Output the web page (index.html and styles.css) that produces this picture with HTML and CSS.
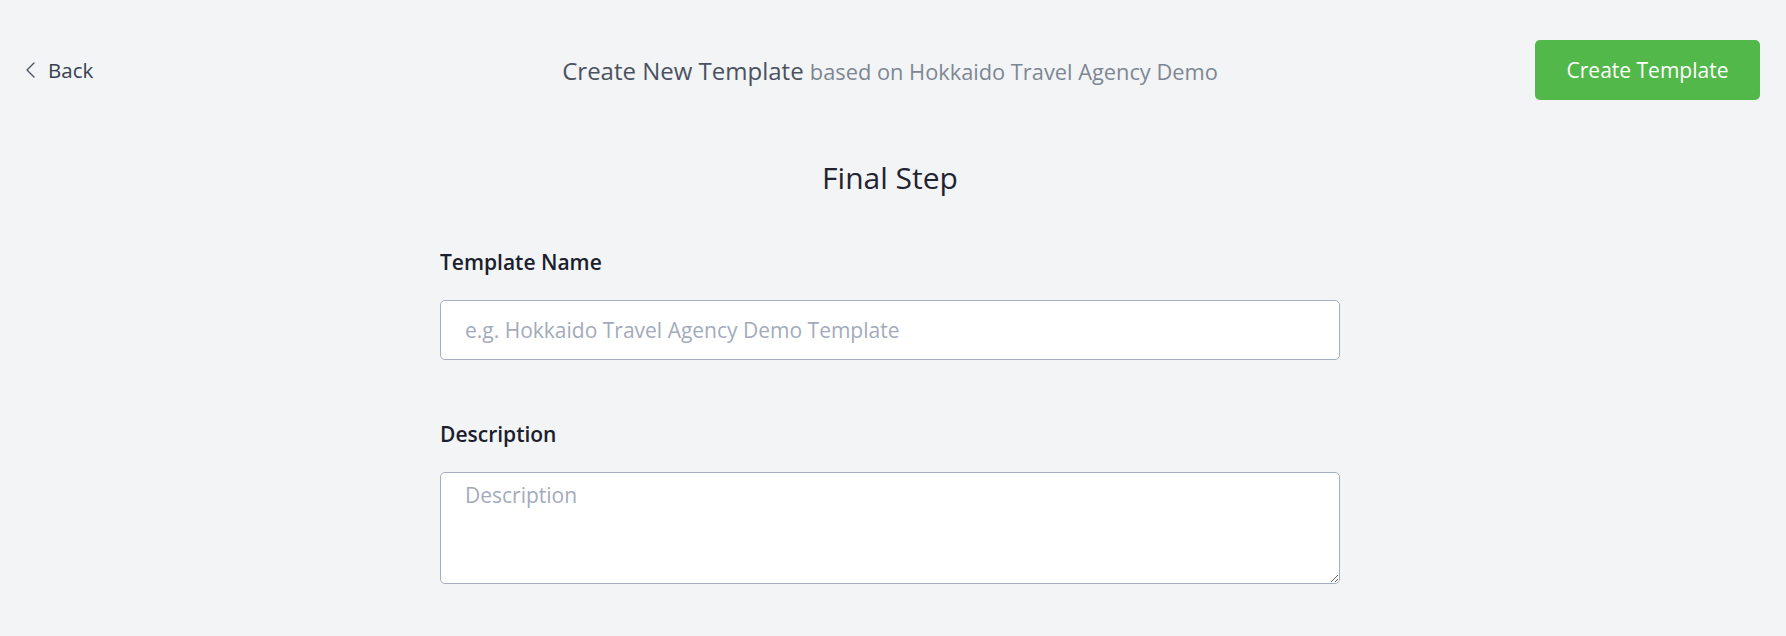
FILE: index.html
```html
<!DOCTYPE html>
<html lang="en">
<head>
<meta charset="utf-8">
<title>Create New Template</title>
<link rel="stylesheet" href="styles.css">
</head>
<body>
<div class="page">
  <header class="topbar">
    <a class="back" href="#">
      <svg class="back-icon" width="12" height="16" viewBox="0 0 12 16" aria-hidden="true">
        <path d="M9 1 L2 8 L9 15" fill="none" stroke="currentColor" stroke-width="1.4" stroke-linecap="round" stroke-linejoin="round"/>
      </svg>
      <span>Back</span>
    </a>
    <div class="title">Create New Template <span class="title-sub">based on Hokkaido Travel Agency Demo</span></div>
    <div class="actions">
      <button class="btn-create" type="button">Create Template</button>
    </div>
  </header>

  <main class="content">
    <h1 class="step-title">Final Step</h1>
    <form class="form">
      <label class="field-label" for="tpl-name">Template Name</label>
      <input class="field-input" id="tpl-name" type="text" placeholder="e.g. Hokkaido Travel Agency Demo Template">
      <label class="field-label field-label-2" for="tpl-desc">Description</label>
      <textarea class="field-textarea" id="tpl-desc" placeholder="Description"></textarea>
    </form>
  </main>
</div>
</body>
</html>
```

FILE: styles.css
```css
html, body {
  margin: 0;
  padding: 0;
  background: #f3f4f6;
}

body {
  font-family: "Open Sans", "Noto Sans", sans-serif;
  color: #1f2937;
}

.page {
  width: 1780px;
}

.topbar {
  display: grid;
  grid-template-columns: 1fr auto 1fr;
  align-items: center;
  height: 60px;
  padding: 40px 20px 0;
}

.back {
  display: flex;
  align-items: center;
  gap: 11px;
  color: #374151;
  text-decoration: none;
  font-size: 20.5px;
  padding-left: 5px;
  justify-self: start;
}

.back-icon {
  display: block;
  color: #4b5563;
}

.title {
  font-size: 24px;
  color: #4a5260;
  white-space: nowrap;
}

.title-sub {
  font-size: 21.8px;
  color: #7d8793;
}

.actions {
  display: flex;
  justify-content: flex-end;
}

.btn-create {
  height: 60px;
  width: 225px;
  border: none;
  border-radius: 5px;
  background: #52b84a;
  color: #ffffff;
  font-family: "Open Sans", "Noto Sans", sans-serif;
  font-size: 21px;
  padding: 0;
  cursor: pointer;
}

.content {
  display: flex;
  flex-direction: column;
  align-items: center;
  padding-top: 58px;
}

.step-title {
  margin: 0;
  font-size: 30px;
  line-height: 40px;
  font-weight: 400;
  color: #1f2430;
}

.form {
  width: 900px;
  display: flex;
  flex-direction: column;
  margin-top: 50px;
}

.field-label {
  font-size: 21px;
  line-height: 28px;
  font-weight: 600;
  color: #1a202c;
  margin-bottom: 24px;
}

.field-label-2 {
  margin-top: 60px;
}

.field-input,
.field-textarea {
  box-sizing: border-box;
  width: 100%;
  border: 1px solid #a5aec0;
  border-radius: 5px;
  background: #ffffff;
  font-family: "Open Sans", "Noto Sans", sans-serif;
  font-size: 21px;
  color: #1f2937;
  padding: 0 24px;
  outline: none;
}

.field-input {
  height: 60px;
}

.field-textarea {
  height: 112px;
  padding: 8px 24px;
  line-height: 28px;
  resize: vertical;
  display: block;
}

.field-input::placeholder,
.field-textarea::placeholder {
  color: #a3abbb;
  opacity: 1;
}
```
